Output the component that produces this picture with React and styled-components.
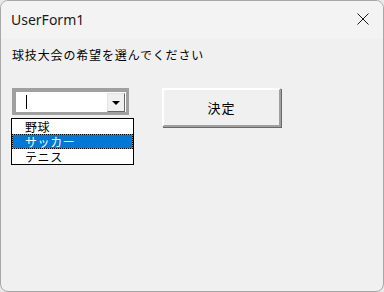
import React from 'react'
import styled, { createGlobalStyle } from 'styled-components'

const GlobalStyle = createGlobalStyle`
  html, body {
    margin: 0;
    padding: 0;
    background: #e9e9e9;
  }
`

const Window = styled.div`
  width: 382px;
  height: 290px;
  background: #f0f0f0;
  border: 1px solid #a8a8a8;
  border-radius: 8px;
  overflow: hidden;
  display: flex;
  flex-direction: column;
  font-family: "Noto Sans CJK JP", sans-serif;
`

const TitleBar = styled.div`
  height: 38px;
  flex-shrink: 0;
  background: #f3f3f3;
  display: flex;
  align-items: center;
  justify-content: space-between;
  padding: 0 14px 0 10px;
`

const Title = styled.span`
  font-family: "Noto Sans", sans-serif;
  font-size: 14px;
  color: #1a1a1a;
  margin-top: -1px;
`

const CloseButton = styled.svg`
  width: 12px;
  height: 12px;
  margin-top: -2px;
`

const Body = styled.div`
  position: relative;
  padding: 8px 0 0 11px;
`

const Prompt = styled.div`
  font-size: 12px;
  letter-spacing: 0.85px;
  line-height: 16px;
  color: #000;
`

const Controls = styled.div`
  display: flex;
  align-items: flex-start;
  gap: 33px;
  margin-top: 25px;
`

const ComboWrap = styled.div`
  position: relative;
`

const Combo = styled.div`
  width: 117px;
  height: 27px;
  box-sizing: border-box;
  border: 3px solid #a0a0a0;
  border-top-width: 4px;
  border-left-width: 4px;
  background: #fff;
  display: flex;
  align-items: center;
  justify-content: space-between;
`

const Caret = styled.span`
  width: 1px;
  height: 14px;
  background: #000;
  margin-left: 10px;
`

const DropButton = styled.div`
  width: 18px;
  height: 19px;
  box-sizing: border-box;
  background: #f0f0f0;
  border: 1px solid;
  border-color: #e3e3e3 #696969 #696969 #e3e3e3;
  display: flex;
  align-items: center;
  justify-content: center;
  margin-right: 1px;
`

const Arrow = styled.span`
  width: 0;
  height: 0;
  border-left: 4px solid transparent;
  border-right: 4px solid transparent;
  border-top: 4px solid #000;
  margin-top: 2px;
`

const List = styled.div`
  position: absolute;
  top: 30px;
  left: -1px;
  width: 123px;
  box-sizing: border-box;
  border: 1px solid #000;
  background: #fff;
`

const Item = styled.div`
  height: 15px;
  box-sizing: border-box;
  padding-left: 12px;
  font-size: 12px;
  line-height: 13px;
  letter-spacing: 0.6px;
  overflow: hidden;
  color: ${p => (p.$selected ? '#fff' : '#000')};
  background: ${p => (p.$selected ? '#0078d7' : 'transparent')};
  border: 1px solid ${p => (p.$selected ? '#f08000' : 'transparent')};
  outline: ${p => (p.$selected ? '1px dotted #000' : 'none')};
  outline-offset: -1px;
`

const Button = styled.div`
  width: 119px;
  height: 39px;
  box-sizing: border-box;
  background: #f0f0f0;
  border: 2px solid;
  border-color: #fff #a0a0a0 #a0a0a0 #fff;
  box-shadow: 1px 1px 0 #696969;
  display: flex;
  align-items: center;
  justify-content: center;
  font-size: 13px;
  letter-spacing: 1px;
  color: #000;
`

const sports = ['野球', 'サッカー', 'テニス']

export default function App() {
  return (
    <>
      <GlobalStyle />
      <Window>
        <TitleBar>
          <Title>UserForm1</Title>
          <CloseButton viewBox="0 0 12 12">
            <path d="M0.5 0.5 L11.5 11.5 M11.5 0.5 L0.5 11.5" stroke="#1a1a1a" strokeWidth="1" />
          </CloseButton>
        </TitleBar>
        <Body>
          <Prompt>球技大会の希望を選んでください</Prompt>
          <Controls>
            <ComboWrap>
              <Combo>
                <Caret />
                <DropButton>
                  <Arrow />
                </DropButton>
              </Combo>
              <List>
                {sports.map(s => (
                  <Item key={s} $selected={s === 'サッカー'}>{s}</Item>
                ))}
              </List>
            </ComboWrap>
            <Button>決定</Button>
          </Controls>
        </Body>
      </Window>
    </>
  )
}
